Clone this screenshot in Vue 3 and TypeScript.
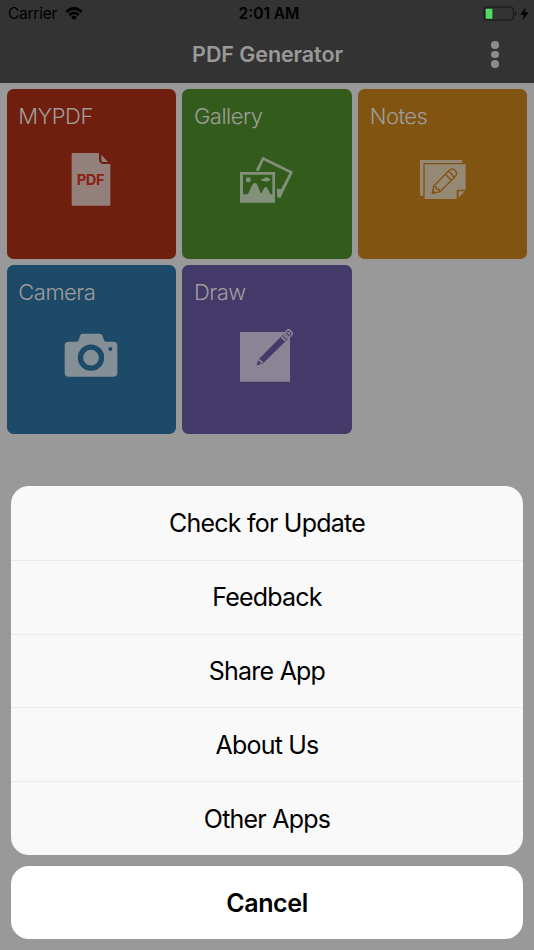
<script setup lang="ts">
interface Tile {
  name: string
  kind: 'pdf' | 'gallery' | 'notes' | 'camera' | 'draw'
  viewBox: string
}

const tiles: Tile[] = [
  { name: 'MYPDF', kind: 'pdf', viewBox: '184 198 180 180' },
  { name: 'Gallery', kind: 'gallery', viewBox: '177 198 180 180' },
  { name: 'Notes', kind: 'notes', viewBox: '176 198 180 180' },
  { name: 'Camera', kind: 'camera', viewBox: '183 199 180 180' },
  { name: 'Draw', kind: 'draw', viewBox: '177 199 180 180' },
]

const actions: string[] = ['Check for Update', 'Feedback', 'Share App', 'About Us', 'Other Apps']
</script>

<template>
  <div class="screen">
    <header class="header">
      <div class="status">
        <div class="carrier">
          <span>Carrier</span>
          <svg class="wifi" viewBox="0 0 54 40">
            <path d="M1 12Q27-12 53 12L47 18Q27 0 7 18Z" />
            <path d="M10 21Q27 6 44 21L38 27Q27 18 16 27Z" />
            <path d="M18 30Q27 22 36 30L27 39Z" />
          </svg>
        </div>
        <div class="time">2:01 AM</div>
        <div class="power">
          <svg viewBox="0 0 138 46">
            <rect x="3.5" y="3.5" width="88" height="39" rx="10" fill="none" stroke="#1c1c1c" stroke-width="4" />
            <rect x="8" y="8" width="20" height="30" rx="2" fill="#4fdb64" />
            <path d="M96 16Q101 18 101 23T96 30Z" fill="#1c1c1c" />
            <path d="M129 2L112 26H123L118 44L137 19H125Z" fill="#000" />
          </svg>
        </div>
      </div>
      <div class="navbar">
        <h1 class="title">PDF Generator</h1>
        <div class="more"><i></i><i></i><i></i></div>
      </div>
    </header>

    <main class="grid">
      <section v-for="tile in tiles" :key="tile.name" class="tile" :class="tile.kind">
        <h2 class="label">{{ tile.name }}</h2>
        <svg class="icon" :viewBox="tile.viewBox">
          <template v-if="tile.kind === 'pdf'">
            <path class="ink" d="M219 207H298V226Q298 240 312 240H332V362Q332 365 329 365H219Q216 365 216 362V210Q216 207 219 207Z" />
            <path class="ink" d="M305 212L325 234H311Q305 234 305 228Z" />
            <text class="pdf-text" x="273" y="303" text-anchor="middle" textLength="84">PDF</text>
          </template>
          <template v-else-if="tile.kind === 'gallery'">
            <path class="ink" fill-rule="evenodd" d="M186 264H291V356H186ZM195 272V331H209C217 320 221 297 231 297C240 297 243 322 250 329C254 324 257 309 263 309C269 309 273 325 278 331H283V272Z" />
            <circle class="ink" cx="211" cy="287" r="7.500" />
            <path class="ink" d="M252 291Q248 288 250 285Q254 284 257 284Q264 277 270 282Q276 282 277 287Q276 291 271 291Q263 294 259 291Z" />
            <path class="ink" d="M233 259L254 218L345 263L307 343L297 339V311Q303 319 310 314L335 267L257 229L242 262Z" />
          </template>
          <template v-else-if="tile.kind === 'notes'">
            <path class="ink" d="M197 228H324V237H207V335H197Z" />
            <path class="ink" d="M211 241H334V317H307V345H211Z" />
            <path class="ink" d="M313 322H331L313 341Z" />
            <g class="cut-line" stroke-width="4">
              <path d="M234 328L238 306L285 259Q293 251 302 259Q311 268 303 277L257 323Z" />
              <path d="M238 307Q247 307 246 315Q255 314 257 323M273 271L291 289M282 262Q286 264 291 269T299 280" />
            </g>
            <path class="cut" d="M234 328L236 317L245 326Z" />
          </template>
          <template v-else-if="tile.kind === 'camera'">
            <path class="ink" d="M206 246H230Q235 246 236 242L240 229Q242 222 248 222H299Q305 222 307 228L312 242Q313 246 318 246H340Q352 246 352 258V339Q352 351 340 351H206Q194 351 194 339V258Q194 246 206 246Z" />
            <circle class="cut-line" cx="273" cy="294" r="31.500" stroke-width="16" />
            <circle class="cut" cx="331" cy="268" r="6" />
          </template>
          <template v-else>
            <path class="ink" d="M186 217H336V366H186Z" />
            <path class="cut" d="M236 317L242 299L311 229L325 217L337 229L324 243L254 312Z" />
            <path class="ink" d="M240 301L245 298L256 308L252 312ZM308 233L312 229L324 241L320 245ZM314 227L318 223L330 235L326 239Z" />
            <path class="ink" fill-rule="evenodd" d="M317 220L326 210Q332 205 339 212L342 215Q348 222 342 228L332 237ZM323 220L334 231L339 225Q342 222 338 218L335 215Q331 212 328 215Z" />
            <path class="ink" d="M241 304L250 312L244 314L239 309Z" />
            <path class="cut" d="M241 303L249 311L236 316Z" />
          </template>
        </svg>
      </section>
    </main>

    <div class="sheet">
      <div class="actions">
        <button v-for="action in actions" :key="action" class="action">{{ action }}</button>
      </div>
      <button class="cancel">Cancel</button>
    </div>
  </div>
</template>

<style>
body {
  margin: 0;
}
</style>

<style scoped>
.screen {
  position: relative;
  width: 534px;
  height: 950px;
  overflow: hidden;
  background: #999;
  font-family: Inter, "Liberation Sans", sans-serif;
}

.header {
  height: 83px;
  background: #333;
}

.status {
  display: grid;
  grid-template-columns: 1fr auto 1fr;
  height: 27px;
  padding: 0 5px 0 8px;
  align-items: center;
  color: #000;
  font-size: 15.5px;
  line-height: 28px;
}

.carrier {
  display: flex;
  align-items: center;
  gap: 7.500px;
  letter-spacing: -0.25px;
}

.wifi {
  width: 18px;
  height: 13.300px;
}

.time {
  padding-left: 1px;
  font-weight: 600;
}

.power {
  display: flex;
  justify-content: flex-end;
}

.power svg {
  width: 46px;
  height: 15.300px;
}

.navbar {
  display: grid;
  grid-template-columns: 1fr auto 1fr;
  align-items: center;
  height: 54px;
}

.title {
  grid-column: 2;
  margin: 0;
  padding-left: 1px;
  color: #999;
  font-size: 21.500px;
  font-weight: 600;
  letter-spacing: -0.08px;
  line-height: 55px;
}

.more {
  display: flex;
  flex-direction: column;
  gap: 2px;
  justify-self: end;
  margin-right: 35.500px;
}

.more i {
  width: 7.500px;
  height: 7.500px;
  border-radius: 50%;
  background: #8c8c8c;
}

.grid {
  display: grid;
  grid-template-columns: repeat(3, 169.200px);
  grid-auto-rows: 169.300px;
  gap: 6.500px;
  padding: 6.300px 6.800px;
}

.tile {
  display: flex;
  flex-direction: column;
  align-items: center;
  border-radius: 6.500px;
}

.label {
  align-self: flex-start;
  height: 60.700px;
  margin: 0;
  padding-left: 11.500px;
  color: #a09d9c;
  font-size: 22px;
  font-weight: 300;
  letter-spacing: -0.5px;
  line-height: 54px;
  box-sizing: border-box;
}

.icon {
  width: 60px;
  height: 60px;
}

.tile.pdf { --paint: #701f0f; --ink: #93807b; }
.tile.gallery { --paint: #335c1c; --ink: #83907b; }
.tile.notes { --paint: #815412; --ink: #958975; }
.tile.camera { --paint: #1c4a68; --ink: #858f96; }
.tile.draw { --paint: #443a69; --ink: #898596; }

.tile { background: var(--paint); }
.ink { fill: var(--ink); }
.cut { fill: var(--paint); }

.cut-line {
  fill: none;
  stroke: var(--paint);
}

.pdf-text {
  fill: #8a2114;
  font-size: 44px;
  font-weight: 700;
}

.sheet {
  position: absolute;
  right: 10.700px;
  bottom: 10.800px;
  left: 10.700px;
  display: flex;
  flex-direction: column;
  gap: 10.500px;
}

.actions {
  display: flex;
  flex-direction: column;
  overflow: hidden;
  border-radius: 18px;
  background: #f9f9f9;
}

.action,
.cancel {
  padding: 0;
  border: 0;
  background: transparent;
  color: #000;
  font-family: inherit;
  font-size: 25px;
}

.action {
  height: 73.900px;
  letter-spacing: -0.78px;
}

.action + .action {
  border-top: 1px solid #ebebeb;
}

.cancel {
  height: 73.500px;
  padding-top: 2px;
  border-radius: 18px;
  background: #fff;
  font-weight: 600;
  letter-spacing: -0.4px;
}
</style>
